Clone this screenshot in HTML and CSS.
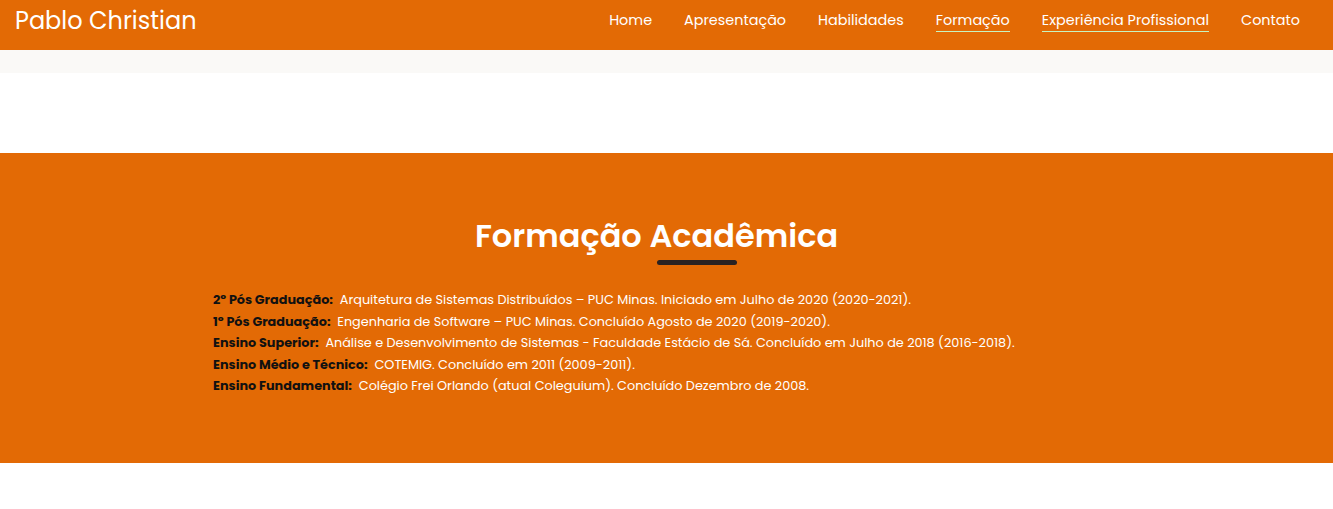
FILE: index.html
```html
<!DOCTYPE html>
<html lang="pt-BR">
<head>
<meta charset="utf-8">
<title>Pablo Christian</title>
<link rel="stylesheet" href="styles.css">
</head>
<body>
<header class="topbar">
  <a class="brand" href="#">Pablo Christian</a>
  <nav class="menu">
    <a href="#">Home</a>
    <a href="#">Apresentação</a>
    <a href="#">Habilidades</a>
    <a href="#" class="active">Formação</a>
    <a href="#" class="active">Experiência Profissional</a>
    <a href="#">Contato</a>
  </nav>
</header>
<div class="strip"></div>
<div class="spacer"></div>
<section class="formacao">
  <div class="wrap">
    <h2 class="title">Formação Acadêmica</h2>
    <div class="title-bar"></div>
    <ul class="list">
      <li><b>2º Pós Graduação:</b>&nbsp; Arquitetura de Sistemas Distribuídos – PUC Minas. Iniciado em Julho de 2020 (2020-2021).</li>
      <li><b>1º Pós Graduação:</b>&nbsp; Engenharia de Software – PUC Minas. Concluído Agosto de 2020 (2019-2020).</li>
      <li><b>Ensino Superior:</b>&nbsp; Análise e Desenvolvimento de Sistemas - Faculdade Estácio de Sá. Concluído em Julho de 2018 (2016-2018).</li>
      <li><b>Ensino Médio e Técnico:</b>&nbsp; COTEMIG. Concluído em 2011 (2009-2011).</li>
      <li><b>Ensino Fundamental:</b>&nbsp; Colégio Frei Orlando (atual Coleguium). Concluído Dezembro de 2008.</li>
    </ul>
  </div>
</section>
<div class="after"></div>
</body>
</html>
```
FILE: styles.css
```css
* { box-sizing: border-box; }
html, body { margin: 0; padding: 0; }
body {
  font-family: Poppins, "Open Sans", "Liberation Sans", sans-serif;
  background: #fff;
  color: #fff;
}
.topbar {
  height: 50px;
  background: #e36a05;
  display: flex;
  align-items: center;
  justify-content: space-between;
  padding: 0 33px 0 15px;
}
.brand {
  color: #fff;
  text-decoration: none;
  font-size: 24px;
  font-weight: 400;
  margin-top: -9px;
}
.menu {
  display: flex;
  gap: 32px;
  margin-top: -9px;
}
.menu a {
  color: #fff;
  text-decoration: none;
  font-size: 14.4px;
  padding-bottom: 0;
  border-bottom: 1px solid transparent;
}
.menu a.active { border-bottom-color: #c8f5c0; }
.strip { height: 23px; background: #faf9f7; }
.spacer { height: 80px; }
.formacao {
  background: #e36a05;
  height: 310px;
  padding-top: 63px;
}
.wrap {
  margin-left: 213px;
  width: 887px;
}
.title {
  margin: 0;
  text-align: center;
  font-size: 32px;
  font-weight: 600;
  line-height: 40px;
}
.title-bar {
  margin: 4px 0 0 444px;
  width: 80px;
  height: 5px;
  border-radius: 3px;
  background: #2a2222;
}
.list {
  list-style: none;
  margin: 24px 0 0;
  padding: 0;
  font-size: 12.8px;
  line-height: 21.5px;
}
.list b { color: #111; font-weight: 700; }
.after { height: 46px; }
```
